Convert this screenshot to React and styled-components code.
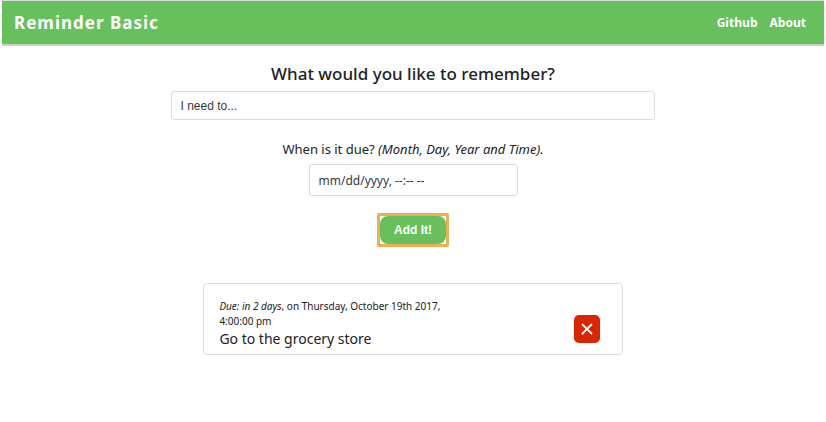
import React from "react";
import styled, { createGlobalStyle } from "styled-components";

const SANS = '"Liberation Sans", Arial, sans-serif';

const GlobalStyle = createGlobalStyle`
  *, *::before, *::after { box-sizing: border-box; }
  body {
    margin: 0;
    background: #fff;
    color: #222;
    font-family: "Noto Sans", "Open Sans", sans-serif;
  }
`;

const Page = styled.div`
  padding: 0 2px;
`;

const Header = styled.header`
  display: flex;
  align-items: center;
  justify-content: space-between;
  height: 46px;
  padding: 0 18px 0 12px;
  border-top: 1px solid #d8dcd8;
  border-bottom: 2px solid #cbcecb;
  background: #67c05c;
  color: #fff;
`;

const Brand = styled.h1`
  margin: 0;
  font-size: 17px;
  line-height: 24px;
  font-weight: 700;
  letter-spacing: 1px;
`;

const Nav = styled.nav`
  display: flex;
  gap: 12px;
`;

const NavLink = styled.a`
  color: #fff;
  font-family: "Open Sans", "Noto Sans", sans-serif;
  font-size: 12px;
  line-height: 20px;
  font-weight: 700;
  text-decoration: none;
`;

const Form = styled.form`
  display: flex;
  flex-direction: column;
  align-items: center;
  padding-top: 16px;
`;

const TaskLabel = styled.label`
  margin-bottom: 5px;
  font-size: 17px;
  line-height: 24px;
  font-weight: 500;
`;

const DueLabel = styled.label`
  margin: 19px 0 5px;
  font-size: 13px;
  line-height: 20px;
`;

const Field = styled.input`
  width: ${(p) => p.$width};
  height: ${(p) => p.$height};
  padding: 0 9px;
  border: 1px solid #dcdcdc;
  border-radius: 3px;
  background: #fff;
  color: #333;
  font-family: ${(p) => p.$font};
  font-size: 12px;

  &::placeholder {
    color: #373a3c;
    opacity: 1;
  }
`;

const FocusFrame = styled.div`
  display: flex;
  margin-top: 17px;
  border: 3px solid #edae55;
  border-radius: 2px;
`;

const AddButton = styled.button`
  height: 28px;
  padding: 0 14px;
  border: 0;
  border-radius: 8px;
  background: #67c05c;
  color: #fff;
  font-family: ${SANS};
  font-size: 12px;
  font-weight: 700;
`;

const List = styled.ul`
  display: flex;
  flex-direction: column;
  align-items: center;
  margin: 36px 0 0;
  padding: 0;
  list-style: none;
`;

const Card = styled.li`
  display: flex;
  align-items: flex-end;
  justify-content: space-between;
  width: 51%;
  padding: 15px 22px 5px 15px;
  border: 1px solid #dcdcdc;
  border-radius: 4px;
`;

const Details = styled.div`
  width: 63%;
`;

const Due = styled.p`
  margin: 0;
  font-size: 10px;
  line-height: 15px;
`;

const Task = styled.p`
  margin: 0;
  font-size: 14px;
  line-height: 20px;
`;

const DeleteButton = styled.button`
  display: flex;
  align-items: center;
  justify-content: center;
  width: 26px;
  height: 28px;
  margin-bottom: 6px;
  padding: 0;
  border: 0;
  border-radius: 5px;
  background: #d82700;
  color: #fff;
`;

export default function App() {
  return (
    <Page>
      <GlobalStyle />
      <Header>
        <Brand>Reminder Basic</Brand>
        <Nav>
          <NavLink href="#github">Github</NavLink>
          <NavLink href="#about">About</NavLink>
        </Nav>
      </Header>
      <main>
        <Form onSubmit={(e) => e.preventDefault()}>
          <TaskLabel htmlFor="task">What would you like to remember?</TaskLabel>
          <Field id="task" type="text" placeholder="I need to..." $width="59%" $height="29px" $font={SANS} />
          <DueLabel htmlFor="due">
            When is it due? <em>(Month, Day, Year and Time).</em>
          </DueLabel>
          <Field id="due" type="text" placeholder="mm/dd/yyyy, --:-- --" $width="209px" $height="32px" $font="inherit" />
          <FocusFrame>
            <AddButton type="submit">Add It!</AddButton>
          </FocusFrame>
        </Form>
        <List>
          <Card>
            <Details>
              <Due>
                <em>Due: in 2 days</em>, on Thursday, October 19th 2017, 4:00:00 pm
              </Due>
              <Task>Go to the grocery store</Task>
            </Details>
            <DeleteButton type="button" aria-label="Delete reminder">
              <svg width="12" height="12" viewBox="0 0 12 12" fill="none" stroke="currentColor" strokeWidth="1.8">
                <path d="M1 1 11 11M11 1 1 11" />
              </svg>
            </DeleteButton>
          </Card>
        </List>
      </main>
    </Page>
  );
}
